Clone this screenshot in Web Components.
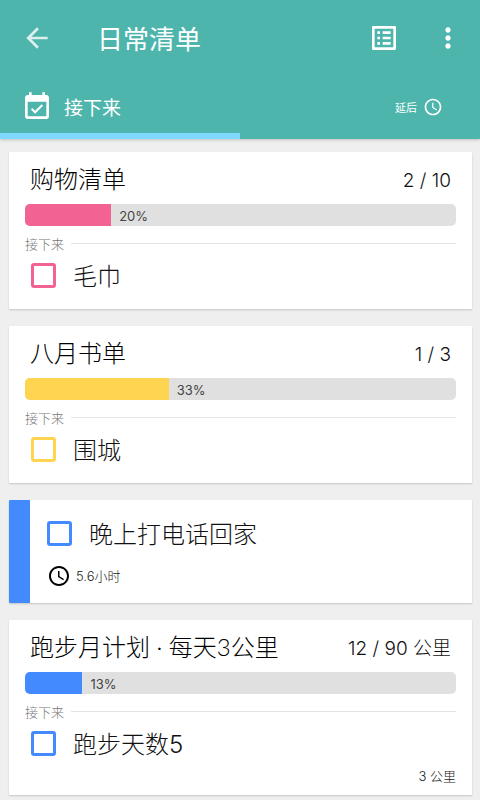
<!DOCTYPE html>
<html lang="zh-CN">
<head>
<meta charset="utf-8">
<meta name="viewport" content="width=device-width, initial-scale=1">
<title>日常清单</title>
<style>
  body {
    margin: 0;
    background: #efefef;
    color: #111;
    font-family: Inter, "Noto Sans CJK SC", sans-serif;
    font-weight: 300;
  }
  main {
    display: flex;
    flex-direction: column;
    gap: 17px;
    padding: 13px 8px 5px 9px;
  }
</style>
</head>
<body>
<app-header heading="日常清单"></app-header>
<main>
  <list-card heading="购物清单" count="2 / 10" done="2" total="10" label="20%" style="--accent:#f26292">
    <task-item>毛巾</task-item>
  </list-card>
  <list-card heading="八月书单" count="1 / 3" done="1" total="3" label="33%" style="--accent:#ffd450">
    <task-item>围城</task-item>
  </list-card>
  <reminder-card time="5.6小时" style="--accent:#448aff">
    <task-item>晚上打电话回家</task-item>
  </reminder-card>
  <list-card heading="跑步月计划 · 每天3公里" count="12 / 90 公里" done="12" total="90" label="13%" style="--accent:#448aff">
    <task-item>跑步天数5</task-item>
    <span slot="note">3 公里</span>
  </list-card>
</main>
<script>
const ICONS = {
  back: 'M20 11H7.83l5.59-5.59L12 4l-8 8 8 8 1.41-1.41L7.83 13H20v-2z',
  list: 'M19 5v14H5V5h14m1.1-2H3.9c-.5 0-.9.4-.9.9v16.2c0 .4.4.9.9.9h16.2c.4 0 .9-.5.9-.9V3.9c0-.5-.5-.9-.9-.9zM11 7h6v2h-6V7zm0 4h6v2h-6v-2zm0 4h6v2h-6zM7 7h2v2H7zm0 4h2v2H7zm0 4h2v2H7z',
  more: 'M12 8c1.1 0 2-.9 2-2s-.9-2-2-2-2 .9-2 2 .9 2 2 2zm0 2c-1.1 0-2 .9-2 2s.9 2 2 2 2-.9 2-2-.9-2-2-2zm0 6c-1.1 0-2 .9-2 2s.9 2 2 2 2-.9 2-2-.9-2-2-2z',
  event: 'M16.53 11.06L15.47 10l-4.88 4.88-2.12-2.12-1.06 1.06L10.59 17l5.94-5.94zM19 3h-1V1h-2v2H8V1H6v2H5c-1.11 0-1.99.9-1.99 2L3 19c0 1.1.89 2 2 2h14c1.1 0 2-.9 2-2V5c0-1.1-.9-2-2-2zm0 16H5V8h14v11z',
  clock: 'M11.99 2C6.47 2 2 6.48 2 12s4.47 10 9.99 10C17.52 22 22 17.52 22 12S17.52 2 11.99 2zM12 20c-4.42 0-8-3.58-8-8s3.58-8 8-8 8 3.58 8 8-3.58 8-8 8zM12.5 7H11v6l5.25 3.15.75-1.23-4.5-2.67z'
};

class AppIcon extends HTMLElement {
  connectedCallback() {
    this.attachShadow({ mode: 'open' }).innerHTML = `
      <style>
        :host { display: block; width: var(--size, 32px); height: var(--size, 32px); flex: none; }
        svg { display: block; width: 100%; height: 100%; fill: currentColor; }
      </style>
      <svg viewBox="0 0 24 24" aria-hidden="true"><path d="${ICONS[this.getAttribute('name')]}"/></svg>`;
  }
}

class AppHeader extends HTMLElement {
  connectedCallback() {
    this.attachShadow({ mode: 'open' }).innerHTML = `
      <style>
        :host { display: block; background: #4db5ac; color: #fff; box-shadow: 0 1px 3px rgba(0,0,0,.2); }
        button { display: flex; align-items: center; padding: 0; border: 0; background: none; color: inherit; font: inherit; cursor: pointer; }
        .bar { display: flex; align-items: center; height: 75px; padding: 0 16px 0 21px; }
        .back { opacity: .8; }
        h1 { flex: 1; margin: 0 0 0 44px; padding-top: 4px; font-size: 26px; font-weight: 400; line-height: 38px; }
        .actions { display: flex; gap: 32px; }
        .tabs { display: grid; grid-template-columns: 1fr 1fr; height: 64px; }
        .next { gap: 11px; padding: 5px 21px 0; border-bottom: 6px solid #80d8ff; font-size: 19px; font-weight: 400; }
        .later { --size: 20px; justify-content: flex-end; gap: 6px; padding-right: 37px; font-size: 11px; font-weight: 400; }
      </style>
      <header>
        <div class="bar">
          <button class="back" aria-label="返回"><app-icon name="back"></app-icon></button>
          <h1>${this.getAttribute('heading')}</h1>
          <div class="actions">
            <button aria-label="列表"><app-icon name="list"></app-icon></button>
            <button aria-label="更多"><app-icon name="more"></app-icon></button>
          </div>
        </div>
        <nav class="tabs">
          <button class="next"><app-icon name="event"></app-icon><span>接下来</span></button>
          <button class="later"><span>延后</span><app-icon name="clock"></app-icon></button>
        </nav>
      </header>`;
  }
}

class TaskItem extends HTMLElement {
  connectedCallback() {
    this.attachShadow({ mode: 'open' }).innerHTML = `
      <style>
        :host { display: block; }
        label { display: flex; align-items: center; gap: 17px; height: 34px; font-size: 24px; line-height: 34px; color: #111; }
        span { padding-top: 4px; }
        input { appearance: none; flex: none; width: 25px; height: 25px; margin: 0; border: 3px solid var(--accent); border-radius: 3px; }
        input:checked { background: var(--accent); }
      </style>
      <label><input type="checkbox"><span><slot></slot></span></label>`;
  }
}

const CARD = 'display: block; background: #fff; border-radius: 1px; box-shadow: 0 1px 2px rgba(0,0,0,.18);';

class ListCard extends HTMLElement {
  connectedCallback() {
    const get = name => this.getAttribute(name);
    this.attachShadow({ mode: 'open' }).innerHTML = `
      <style>
        :host { ${CARD} }
        article { padding: 0 16px; }
        .head { display: flex; align-items: center; justify-content: space-between; height: 52px; padding: 0 5px; }
        h2 { margin: 0; padding-top: 2px; font-family: Lato, "Noto Sans CJK SC", sans-serif; font-size: 24px; font-weight: 300; line-height: 34px; color: #000; }
        .count { font-size: 19px; line-height: 28px; padding-top: 6px; color: #111; }
        .track { display: flex; height: 22px; border-radius: 5px; background: #e0e0e0; overflow: hidden; }
        .fill { width: calc(100% * ${get('done')} / ${get('total')}); background: var(--accent); }
        .pct { padding-left: 8px; font-size: 13px; line-height: 24px; font-weight: 400; color: #444; }
        .next { display: flex; align-items: center; gap: 7px; height: 32px; padding-top: 2px; box-sizing: border-box; font-size: 13px; color: #777; }
        .next::after { content: ""; flex: 1; height: 1px; background: #e4e4e4; }
        .items { padding: 0 6px; }
        footer { min-height: 17px; text-align: right; font-size: 13px; color: #222; }
        ::slotted([slot=note]) { display: block; line-height: 18px; padding: 7px 0 10px; }
      </style>
      <article>
        <div class="head"><h2>${get('heading')}</h2><span class="count">${get('count')}</span></div>
        <div class="track" role="progressbar" aria-valuenow="${get('done')}" aria-valuemax="${get('total')}" aria-label="${get('heading')}">
          <div class="fill"></div><span class="pct">${get('label')}</span>
        </div>
        <div class="next">接下来</div>
        <div class="items"><slot></slot></div>
        <footer><slot name="note"></slot></footer>
      </article>`;
  }
}

class ReminderCard extends HTMLElement {
  connectedCallback() {
    this.attachShadow({ mode: 'open' }).innerHTML = `
      <style>
        :host { ${CARD} }
        article { padding: 16px 17px 15px; border-left: 21px solid var(--accent); border-radius: 1px; }
        .time { display: flex; align-items: center; gap: 5px; padding-top: 14px; --size: 24px; color: #000; font-size: 13px; line-height: 24px; }
        .time span { color: #222; }
      </style>
      <article>
        <slot></slot>
        <div class="time"><app-icon name="clock"></app-icon><span>${this.getAttribute('time')}</span></div>
      </article>`;
  }
}

customElements.define('app-icon', AppIcon);
customElements.define('app-header', AppHeader);
customElements.define('task-item', TaskItem);
customElements.define('list-card', ListCard);
customElements.define('reminder-card', ReminderCard);
</script>
</body>
</html>
